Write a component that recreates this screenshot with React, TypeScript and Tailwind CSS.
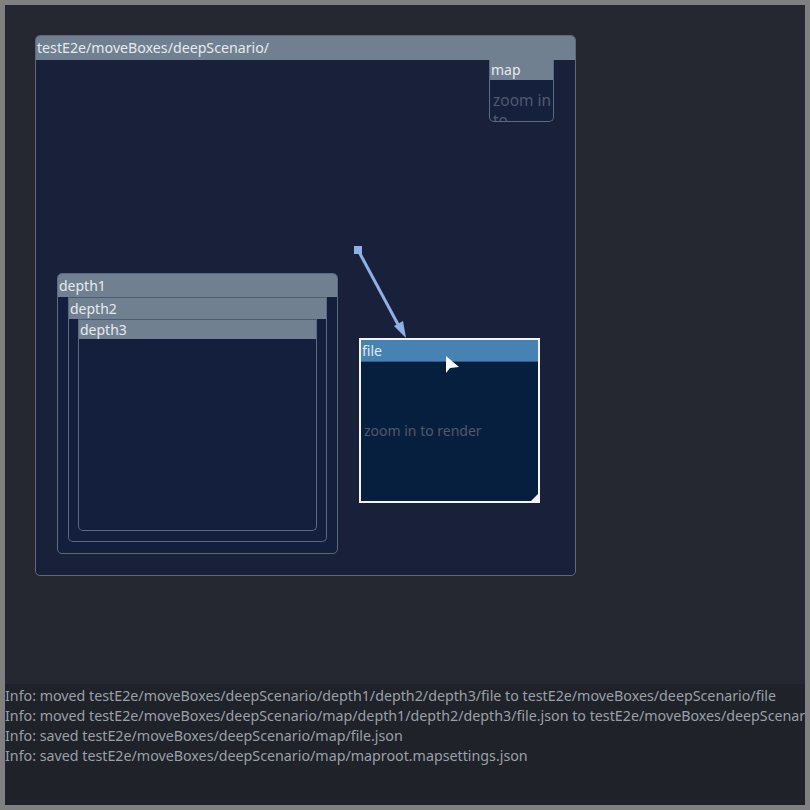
import React from 'react';

const font = { fontFamily: '"Noto Sans", "Open Sans", sans-serif' };

const logLines = [
  'Info: moved testE2e/moveBoxes/deepScenario/depth1/depth2/depth3/file to testE2e/moveBoxes/deepScenario/file',
  'Info: moved testE2e/moveBoxes/deepScenario/map/depth1/depth2/depth3/file.json to testE2e/moveBoxes/deepScenario/file.json',
  'Info: saved testE2e/moveBoxes/deepScenario/map/file.json',
  'Info: saved testE2e/moveBoxes/deepScenario/map/maproot.mapsettings.json',
];

const App: React.FC = () => {
  return (
    <div className="w-[810px] h-[810px] bg-[#808080] p-[5px] overflow-hidden" style={font}>
      <div className="w-[800px] h-[800px] flex flex-col bg-[#252830]">
        {/* canvas */}
        <div className="relative h-[679px] overflow-hidden">
          {/* root box */}
          <div className="absolute left-[30px] top-[30px] w-[541px] h-[541px] rounded-[5px] border border-[#5b6a80] bg-[#19213a] overflow-hidden">
            <div className="h-[24px] bg-[#708090] text-[#e6e9ee] text-[14.2px] leading-[24px] pl-[1px]">
              testE2e/moveBoxes/deepScenario/
            </div>

            {/* map */}
            <div className="absolute left-[453px] top-[24px] w-[65px] h-[62px] rounded-b-[5px] border border-t-0 border-[#5b6a80] bg-[#15203d] overflow-hidden">
              <div className="h-[20px] bg-[#708090] text-[#e6e9ee] text-[14px] leading-[20px] pl-[1px]">map</div>
              <div className="text-[#4f5a6c] text-[15.5px] leading-[20px] pl-[3px] pt-[10px]">zoom in to render</div>
            </div>

            {/* depth1 */}
            <div className="absolute left-[21px] top-[237px] w-[281px] h-[281px] rounded-[5px] border border-[#5b6a80] bg-[#131f3c] overflow-hidden">
              <div className="h-[23px] bg-[#708090] text-[#e6e9ee] text-[14px] leading-[23px] pl-[1px]">depth1</div>
              <div className="ml-[10px] mr-[10px] h-[245px] rounded-b-[5px] border border-t-0 border-[#5b6a80] overflow-hidden">
                <div className="h-[22px] bg-[#708090] text-[#e6e9ee] text-[14px] leading-[22px] pl-[1px] border-t border-[#4c5b70]">depth2</div>
                <div className="ml-[9px] mr-[9px] h-[212px] rounded-b-[5px] border border-t-0 border-[#5b6a80] overflow-hidden">
                  <div className="h-[20px] bg-[#708090] text-[#e6e9ee] text-[14px] leading-[20px] pl-[1px] border-t border-[#4c5b70]">depth3</div>
                </div>
              </div>
            </div>

            {/* file */}
            <div className="absolute left-[323px] top-[302px] w-[181px] h-[165px] border-2 border-[#f2f4f7] bg-[#061f3f]">
              <div className="h-[22px] bg-[#4682b4] text-[#e6e9ee] text-[14px] leading-[22px] pl-[1px] border-b border-[#2f5a82]">file</div>
              <div className="pt-[58px] pl-[3px] text-[#4f5a6c] text-[14px]">zoom in to render</div>
              <div className="absolute right-0 bottom-0 w-0 h-0 border-l-[7px] border-l-transparent border-b-[7px] border-b-[#f2f4f7]" />
            </div>
          </div>

          {/* link arrow */}
          <svg className="absolute left-0 top-0" width="800" height="679">
            <rect x="349" y="241" width="8" height="8" fill="#8db1e6" />
            <line x1="353" y1="245" x2="396" y2="325" stroke="#8db1e6" strokeWidth="3" />
            <polygon points="401,333 389,321 398,316" fill="#8db1e6" />
          </svg>

          {/* cursor */}
          <svg className="absolute left-[440px] top-[350px]" width="16" height="20" viewBox="0 0 16 20">
            <path d="M1 1 L1 18 L5 13 L14 12 Z" fill="#ffffff" />
          </svg>
        </div>

        {/* log */}
        <div className="flex-1 bg-[#1f2228] pt-[2px] text-[#9aa0a8] text-[14.25px] leading-[20px] whitespace-nowrap overflow-hidden">
          {logLines.map((line, i) => (
            <div key={i}>{line}</div>
          ))}
        </div>
      </div>
    </div>
  );
};

export default App;
